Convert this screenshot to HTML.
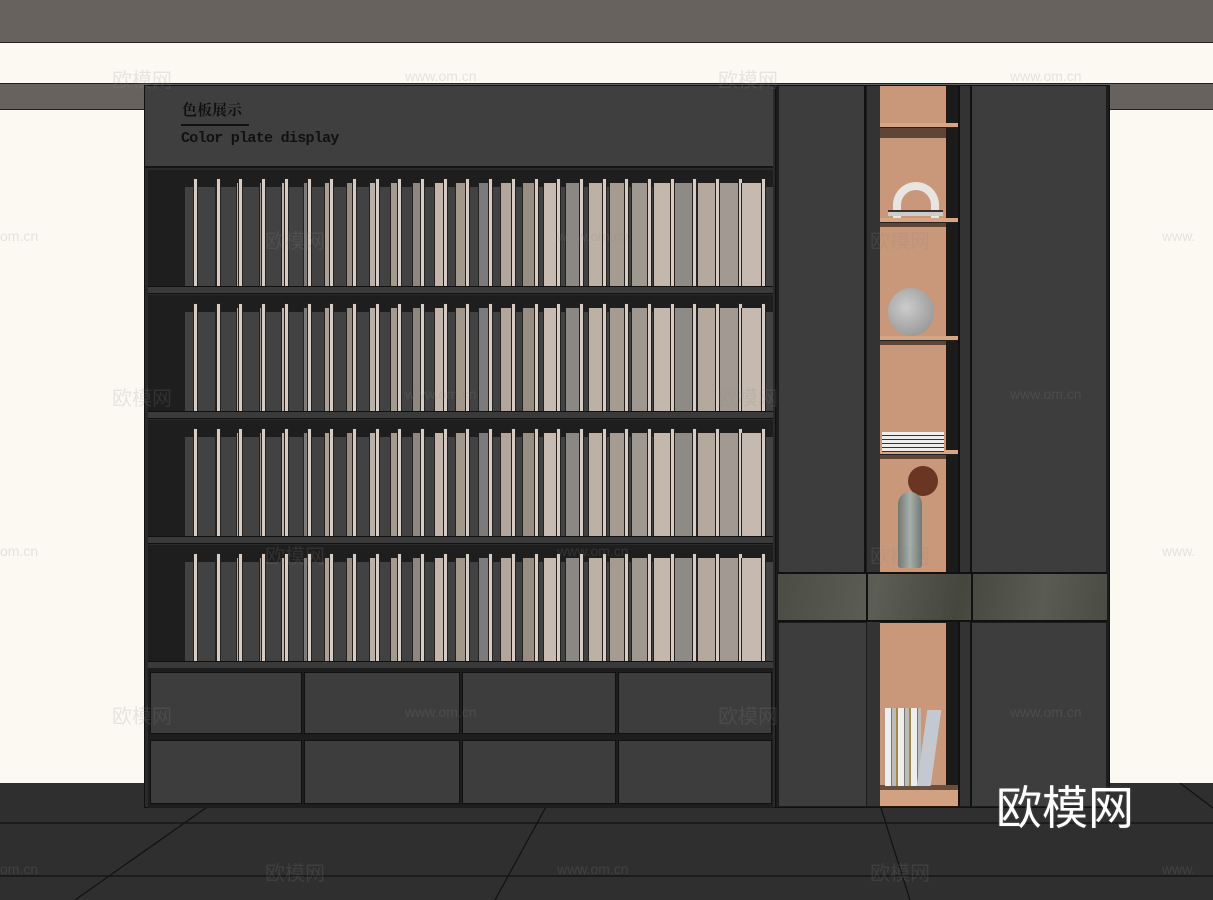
<!DOCTYPE html>
<html><head><meta charset="utf-8"><style>
*{margin:0;padding:0;box-sizing:border-box}
body{width:1213px;height:900px;position:relative;overflow:hidden;background:#fcf8f2;font-family:"Liberation Sans","Noto Sans CJK SC",sans-serif}
.a{position:absolute}
.wm{position:absolute;color:rgba(140,140,140,.18);font-size:20px;font-family:"Noto Sans CJK SC",sans-serif}
.ww{position:absolute;color:rgba(140,140,140,.2);font-size:14px;font-family:"Liberation Sans",sans-serif}
</style></head><body>
<div class="a" style="left:0;top:0;width:1213px;height:43px;background:#67625e;border-bottom:1px solid #222"></div>
<div class="a" style="left:0;top:83px;width:1213px;height:27px;background:#67625e;border-top:1px solid #222;border-bottom:1px solid #222"></div>
<div class="a" style="left:0;top:783px;width:1213px;height:117px;background:#2f2f2f"></div>
<svg class="a" style="left:0;top:783px" width="1213" height="117"><g stroke="#111" stroke-width="1.2" fill="none">
<line x1="0" y1="40" x2="1213" y2="40"/><line x1="0" y1="93" x2="1213" y2="93"/>
<line x1="210" y1="22" x2="75" y2="117"/><line x1="547" y1="22" x2="495" y2="117"/><line x1="880" y1="22" x2="910" y2="117"/><line x1="1180" y1="0" x2="1213" y2="25"/></g></svg>
<div class="a" style="left:144px;top:85px;width:632px;height:723px;background:#2a2a2a;border:1px solid #111"></div>
<div class="a" style="left:145px;top:86px;width:628px;height:82px;background:#3f3f3f;border-bottom:2px solid #151515"></div>
<div class="a" style="left:182px;top:99px;font-size:15px;color:#111;font-weight:bold;font-family:'Noto Serif CJK SC',serif">色板展示</div>
<div class="a" style="left:181px;top:124px;width:68px;height:2px;background:#111"></div>
<div class="a" style="left:181px;top:130px;font-size:15px;color:#111;font-weight:bold;font-family:'Liberation Mono',monospace;letter-spacing:-.7px">Color plate display</div>
<div id="rows"></div>
<div class="a" style="left:148px;top:668px;width:625px;height:140px;background:#1d1d1d"></div>
<div id="dr"></div>
<div class="a" style="left:775px;top:85px;width:335px;height:723px;background:#1c1c1c;border:1px solid #111"></div>
<div class="a" style="left:779px;top:86px;width:87px;height:486px;background:#3d3d3d;border-right:2px solid #111"></div>
<div class="a" style="left:867px;top:86px;width:13px;height:720px;background:#333"></div>
<div class="a" style="left:958px;top:86px;width:14px;height:720px;background:#333;border-left:2px solid #111;border-right:2px solid #111"></div>
<div class="a" style="left:972px;top:86px;width:134px;height:486px;background:#3d3d3d"></div>
<div class="a" style="left:880px;top:86px;width:66px;height:486px;background:#c9987b"></div>
<div class="a" style="left:946px;top:86px;width:12px;height:486px;background:#1b1b1b"></div>
<div id="sh"></div>
<div class="a" style="left:778px;top:572px;width:329px;height:50px;background:linear-gradient(100deg,#4b4d45,#5c5e55 30%,#45473f 55%,#5a5b52 80%,#4a4c44);border-top:2px solid #111;border-bottom:2px solid #111"></div>
<div class="a" style="left:866px;top:572px;width:2px;height:50px;background:#111"></div>
<div class="a" style="left:971px;top:572px;width:2px;height:50px;background:#111"></div>
<div class="a" style="left:779px;top:623px;width:87px;height:183px;background:#3d3d3d"></div>
<div class="a" style="left:972px;top:623px;width:134px;height:183px;background:#3d3d3d"></div>
<div class="a" style="left:880px;top:623px;width:66px;height:162px;background:#c9987b"></div>
<div class="a" style="left:946px;top:623px;width:12px;height:183px;background:#1b1b1b"></div>
<div class="a" style="left:880px;top:785px;width:78px;height:5px;background:#6b4f3c"></div>
<div class="a" style="left:880px;top:790px;width:78px;height:16px;background:#d2a181"></div>
<div class="a" style="left:893px;top:182px;width:46px;height:36px;border:8px solid #e8e4e0;border-bottom:none;border-radius:23px 23px 0 0"></div>
<div class="a" style="left:888px;top:210px;width:55px;height:6px;background:#ccc;border-top:2px solid #333"></div>
<div class="a" style="left:888px;top:288px;width:46px;height:48px;border-radius:50%;background:radial-gradient(circle at 40% 40%,#ccc,#8a8a8a)"></div>
<div class="a" style="left:882px;top:432px;width:62px;height:20px;background:repeating-linear-gradient(#eee 0 3px,#333 3px 4px)"></div>
<div class="a" style="left:908px;top:466px;width:30px;height:30px;border-radius:50%;background:#6b3524"></div>
<div class="a" style="left:898px;top:492px;width:24px;height:76px;border-radius:12px 12px 3px 3px;background:linear-gradient(90deg,#6f7873,#a7b0ab,#6f7873)"></div>
<div class="a" style="left:885px;top:708px;width:36px;height:78px;background:repeating-linear-gradient(90deg,#eee 0 6px,#777 6px 7px,#bbb 7px 11px,#a08a4a 11px 13px)"></div>
<div class="a" style="left:922px;top:710px;width:14px;height:76px;background:#c4c8d0;transform:skewX(-8deg)"></div>
<div class="a" style="left:996px;top:772px;font-size:46px;color:#fff;font-family:'Noto Sans CJK SC',sans-serif;text-shadow:0 0 2px #555">欧模网</div>
<div class="wm" style="left:112px;top:64px">欧模网</div><div class="wm" style="left:718px;top:64px">欧模网</div>
<div class="wm" style="left:265px;top:225px">欧模网</div><div class="wm" style="left:870px;top:225px">欧模网</div>
<div class="wm" style="left:112px;top:382px">欧模网</div><div class="wm" style="left:718px;top:382px">欧模网</div>
<div class="wm" style="left:265px;top:540px">欧模网</div><div class="wm" style="left:870px;top:540px">欧模网</div>
<div class="wm" style="left:112px;top:700px">欧模网</div><div class="wm" style="left:718px;top:700px">欧模网</div>
<div class="wm" style="left:265px;top:857px">欧模网</div><div class="wm" style="left:870px;top:857px">欧模网</div>
<div class="ww" style="left:405px;top:68px">www.om.cn</div><div class="ww" style="left:1010px;top:68px">www.om.cn</div>
<div class="ww" style="left:0;top:228px">om.cn</div><div class="ww" style="left:557px;top:228px">www.om.cn</div><div class="ww" style="left:1162px;top:228px">www.</div>
<div class="ww" style="left:405px;top:386px">www.om.cn</div><div class="ww" style="left:1010px;top:386px">www.om.cn</div>
<div class="ww" style="left:0;top:543px">om.cn</div><div class="ww" style="left:557px;top:543px">www.om.cn</div><div class="ww" style="left:1162px;top:543px">www.</div>
<div class="ww" style="left:405px;top:704px">www.om.cn</div><div class="ww" style="left:1010px;top:704px">www.om.cn</div>
<div class="ww" style="left:0;top:861px">om.cn</div><div class="ww" style="left:557px;top:861px">www.om.cn</div><div class="ww" style="left:1162px;top:861px">www.</div>
<script>
var h='';var tops=[170,295,420,545];
var cols=['#a9a39d','#8f8a86','#b8aaa0','#9c958c','#c2b3a8','#7f7b78','#aca196','#958c81','#b9b0a7','#a59a8e','#8d877f','#c3b5ab','#a1978b','#7c7a7a','#b2a69a','#978d82','#c8bcb2','#8b8783','#bdb1a6','#a69b90','#9f9891','#c4b7ac','#8e8a86','#b5a89c','#a29a92','#c6bab0'];
tops.forEach(function(t){
h+='<div class="a" style="left:148px;top:'+t+'px;width:625px;height:120px;background:#1e1e1e"></div>';
h+='<div class="a" style="left:185px;top:'+(t+17)+'px;width:588px;height:100px;background:#424242"></div>';
for(var i=0;i<26;i++){var x=193+i*22.7;var w=Math.round(i*0.8);
h+='<div class="a" style="left:'+(x-w)+'px;top:'+(t+10+(w?3:0))+'px;width:'+w+'px;height:'+(107-(w?3:0))+'px;background:'+cols[i]+';border-left:1px solid #222"></div>';
h+='<div class="a" style="left:'+x+'px;top:'+(t+8)+'px;width:5px;height:109px;background:#d8ccc2;border:1px solid #222"></div>';}
h+='<div class="a" style="left:148px;top:'+(t+116)+'px;width:625px;height:8px;background:#3a3a3a;border-top:1px solid #111;border-bottom:1px solid #111"></div>';
});
document.getElementById('rows').innerHTML=h;
var d='';var xs=[150,304,462,618],ws=[152,156,154,154];
[672,740].forEach(function(y){for(var i=0;i<4;i++)d+='<div class="a" style="left:'+xs[i]+'px;top:'+y+'px;width:'+ws[i]+'px;height:'+(y==672?62:64)+'px;background:#3d3d3d;border:1px solid #111"></div>';});
document.getElementById('dr').innerHTML=d;
var s='';[125,220,338,452].forEach(function(y){s+='<div class="a" style="left:880px;top:'+(y-2)+'px;width:78px;height:5px;background:#d6a586;border-bottom:1px solid #222"></div><div class="a" style="left:880px;top:'+(y+3)+'px;width:66px;height:'+(y==125?10:4)+'px;background:#5e4535"></div>';});
document.getElementById('sh').innerHTML=s;
</script>
</body></html>
